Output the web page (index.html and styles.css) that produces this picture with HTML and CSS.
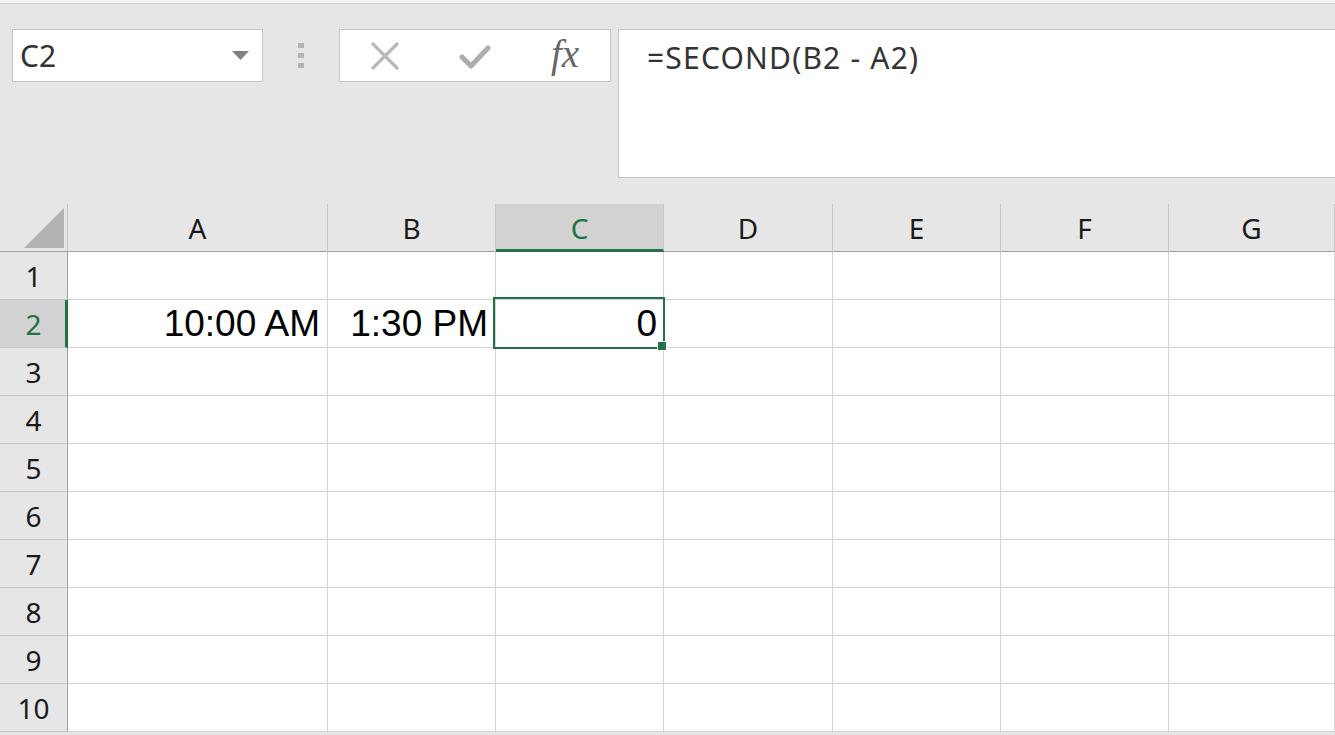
FILE: index.html
```html
<!DOCTYPE html>
<html lang="en">
<head>
    <meta charset="UTF-8">
    <title>SECOND</title>
    <link rel="stylesheet" href="styles.css">
</head>
<body>

<div class="top-strip"></div>

<!-- 公式栏 -->
<div class="formula-bar">
    <div class="name-box">
        <span class="name-text">C2</span>
        <svg class="name-arrow" width="17" height="9" viewBox="0 0 17 9"><polygon points="0,0 17,0 8.5,9" fill="#808080"/></svg>
    </div>
    <div class="grip">
        <span></span><span></span><span></span>
    </div>
    <div class="fx-box">
        <div class="fx-slot">
            <svg width="30" height="28" viewBox="0 0 30 28"><path d="M3 2 L27 26 M27 2 L3 26" stroke="#b9b9b9" stroke-width="3.2" stroke-linecap="round" fill="none"/></svg>
        </div>
        <div class="fx-slot">
            <svg width="32" height="28" viewBox="0 0 32 28"><path d="M3 15 L12 24 L29 6" stroke="#adadad" stroke-width="5" stroke-linecap="round" stroke-linejoin="round" fill="none"/></svg>
        </div>
        <div class="fx-slot fx-text">fx</div>
    </div>
    <div class="formula-input">=SECOND(B2 - A2)</div>
</div>

<!-- 表格 -->
<div class="sheet">
    <div class="corner">
        <svg width="40" height="40" viewBox="0 0 40 40"><polygon points="0,40 40,40 40,0" fill="#b4b4b4"/></svg>
    </div>
    <div class="col-head">A</div>
    <div class="col-head">B</div>
    <div class="col-head active">C</div>
    <div class="col-head">D</div>
    <div class="col-head">E</div>
    <div class="col-head">F</div>
    <div class="col-head">G</div>

    <div class="row-head">1</div>
    <div class="cell"></div><div class="cell"></div><div class="cell"></div><div class="cell"></div><div class="cell"></div><div class="cell"></div><div class="cell"></div>

    <div class="row-head active">2</div>
    <div class="cell">10:00 AM</div><div class="cell">1:30 PM</div><div class="cell selected">0</div><div class="cell"></div><div class="cell"></div><div class="cell"></div><div class="cell"></div>

    <div class="row-head">3</div>
    <div class="cell"></div><div class="cell"></div><div class="cell"></div><div class="cell"></div><div class="cell"></div><div class="cell"></div><div class="cell"></div>

    <div class="row-head">4</div>
    <div class="cell"></div><div class="cell"></div><div class="cell"></div><div class="cell"></div><div class="cell"></div><div class="cell"></div><div class="cell"></div>

    <div class="row-head">5</div>
    <div class="cell"></div><div class="cell"></div><div class="cell"></div><div class="cell"></div><div class="cell"></div><div class="cell"></div><div class="cell"></div>

    <div class="row-head">6</div>
    <div class="cell"></div><div class="cell"></div><div class="cell"></div><div class="cell"></div><div class="cell"></div><div class="cell"></div><div class="cell"></div>

    <div class="row-head">7</div>
    <div class="cell"></div><div class="cell"></div><div class="cell"></div><div class="cell"></div><div class="cell"></div><div class="cell"></div><div class="cell"></div>

    <div class="row-head">8</div>
    <div class="cell"></div><div class="cell"></div><div class="cell"></div><div class="cell"></div><div class="cell"></div><div class="cell"></div><div class="cell"></div>

    <div class="row-head">9</div>
    <div class="cell"></div><div class="cell"></div><div class="cell"></div><div class="cell"></div><div class="cell"></div><div class="cell"></div><div class="cell"></div>

    <div class="row-head">10</div>
    <div class="cell"></div><div class="cell"></div><div class="cell"></div><div class="cell"></div><div class="cell"></div><div class="cell"></div><div class="cell"></div>
</div>

</body>
</html>
```

FILE: styles.css
```css
* {
    box-sizing: border-box;
}
html, body {
    margin: 0;
    padding: 0;
    overflow: hidden;
}
body {
    background-color: #e6e6e6;
    font-family: "Noto Sans", "Open Sans", sans-serif;
    color: #333;
}
.top-strip {
    height: 4px;
    background-color: #f3f3f3;
    border-bottom: 1px solid #cdcdcd;
}
/* 公式栏 */
.formula-bar {
    display: flex;
    align-items: flex-start;
    padding: 25px 0 0 12px;
    height: 200px;
}
.name-box {
    width: 251px;
    height: 53px;
    border: 1px solid #c6c6c6;
    background-color: #fff;
    display: flex;
    align-items: center;
    justify-content: space-between;
    padding: 0 13px 0 7px;
}
.name-text {
    font-size: 30px;
    color: #333;
}
.grip {
    width: 76px;
    display: flex;
    flex-direction: column;
    align-items: center;
    gap: 5px;
    padding-top: 14px;
}
.grip span {
    width: 6px;
    height: 5px;
    background-color: #b4b4b4;
}
.fx-box {
    width: 272px;
    height: 53px;
    border: 1px solid #c6c6c6;
    background-color: #fff;
    display: flex;
}
.fx-slot {
    width: 90px;
    display: flex;
    align-items: center;
    justify-content: center;
}
.fx-text {
    font-family: "Liberation Serif", "DejaVu Serif", serif;
    font-style: italic;
    font-size: 39px;
    color: #666;
    padding-bottom: 4px;
}
.formula-input {
    flex: 1;
    margin-left: 7px;
    height: 149px;
    border: 1px solid #c6c6c6;
    border-right: none;
    background-color: #fff;
    padding-left: 28px;
    font-size: 30px;
    letter-spacing: 1.2px;
    line-height: 56px;
    color: #333;
}
/* 表格 */
.sheet {
    display: grid;
    grid-template-columns: 68px 260px 168px 168px 169px 168px 168px 1fr;
    grid-auto-rows: 48px;
}
.corner {
    border-right: 1px solid #c6c6c6;
    border-bottom: 1px solid #a0a0a0;
    display: flex;
    align-items: flex-end;
    justify-content: flex-end;
    padding: 0 3px 3px 0;
}
.corner svg {
    display: block;
}
.col-head {
    background-color: #e6e6e6;
    border-right: 1px solid #c6c6c6;
    border-bottom: 1px solid #a0a0a0;
    display: flex;
    align-items: center;
    justify-content: center;
    font-size: 28px;
    color: #1a1a1a;
}
.col-head.active {
    background-color: #d2d2d2;
    color: #217346;
    border-bottom: 3px solid #217346;
    padding-top: 2px;
}
.row-head {
    background-color: #e6e6e6;
    border-right: 1px solid #a0a0a0;
    border-bottom: 1px solid #c8c8c8;
    display: flex;
    align-items: center;
    justify-content: center;
    font-size: 28px;
    color: #1a1a1a;
}
.row-head.active {
    background-color: #d2d2d2;
    color: #217346;
    border-right: 3px solid #217346;
    padding-left: 2px;
}
.cell {
    background-color: #fff;
    border-right: 1px solid #d4d4d4;
    border-bottom: 1px solid #d4d4d4;
    display: flex;
    align-items: center;
    justify-content: flex-end;
    padding-right: 7px;
    font-family: "Liberation Sans", Arial, sans-serif;
    font-size: 37px;
    color: #000;
    white-space: nowrap;
}
.cell.selected {
    position: relative;
    padding-right: 6px;
}
.cell.selected::before {
    content: "";
    position: absolute;
    top: -3px;
    left: -3px;
    right: -2px;
    bottom: -2px;
    border: 2px solid #217346;
    z-index: 2;
}
.cell.selected::after {
    content: "";
    position: absolute;
    right: -4px;
    bottom: -4px;
    width: 8px;
    height: 8px;
    background-color: #217346;
    border: 1px solid #fff;
    z-index: 3;
}
```
